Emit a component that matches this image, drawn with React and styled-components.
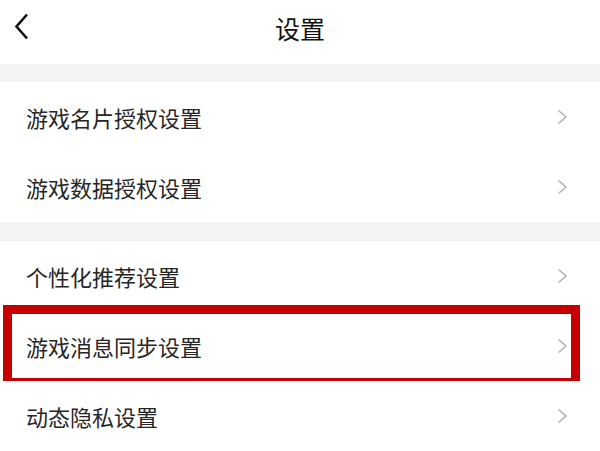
import React from "react";
import styled, { createGlobalStyle } from "styled-components";

const Global = createGlobalStyle`
  html, body { margin: 0; padding: 0; background: #ffffff; }
  body { font-family: "Noto Sans CJK SC", "Noto Sans", sans-serif; }
  * { box-sizing: border-box; }
`;

const Page = styled.div`
  width: 600px;
  height: 451px;
  overflow: hidden;
  background: #ffffff;
  display: flex;
  flex-direction: column;
`;

const Header = styled.div`
  height: 64px;
  display: grid;
  grid-template-columns: 60px 1fr 60px;
  align-items: center;
`;

const BackButton = styled.div`
  display: flex;
  align-items: center;
  padding-left: 14px;
  height: 100%;
  padding-bottom: 10px;
`;

const Title = styled.div`
  text-align: center;
  font-size: 25px;
  color: #111;
  padding-bottom: 8px;
  letter-spacing: 0px;
`;

const Gap = styled.div`
  height: ${(p) => p.$h}px;
  background: #f3f3f3;
`;

const Row = styled.div`
  position: relative;
  height: 70px;
  display: flex;
  align-items: center;
  justify-content: space-between;
  padding: 0 32px 0 26px;
  background: #fff;
`;

const Label = styled.span`
  font-size: 22px;
  color: #262626;
`;

const Highlight = styled.div`
  position: absolute;
  top: -6px;
  bottom: -6px;
  left: 3px;
  right: 20px;
  border: 9px solid #c60000;
  pointer-events: none;
`;

const Chevron = () => (
  <svg width="11" height="16" viewBox="0 0 11 16">
    <path d="M1.5 1.5 L9 8 L1.5 14.5" fill="none" stroke="#b3b3b3" strokeWidth="1.6" />
  </svg>
);

const Back = () => (
  <svg width="15" height="27" viewBox="0 0 15 27">
    <path d="M13 1.5 L2.5 13.5 L13 25.5" fill="none" stroke="#111" strokeWidth="2.6" />
  </svg>
);

const Item = ({ label, highlighted }) => (
  <Row>
    <Label>{label}</Label>
    <Chevron />
    {highlighted && <Highlight />}
  </Row>
);

export default function App() {
  return (
    <>
      <Global />
      <Page>
        <Header>
          <BackButton>
            <Back />
          </BackButton>
          <Title>设置</Title>
          <div />
        </Header>
        <Gap $h={18} />
        <Item label="游戏名片授权设置" />
        <Item label="游戏数据授权设置" />
        <Gap $h={20} />
        <Item label="个性化推荐设置" />
        <Item label="游戏消息同步设置" highlighted />
        <Item label="动态隐私设置" />
      </Page>
    </>
  );
}
